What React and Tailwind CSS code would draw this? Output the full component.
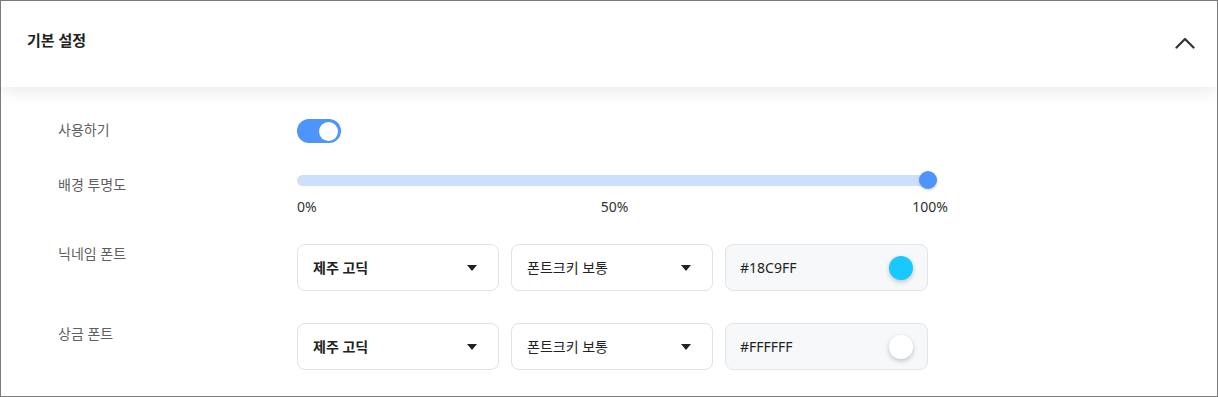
import React, { useState } from "react";

const FONT = {
  fontFamily: '"Noto Sans", "Noto Sans CJK KR", sans-serif',
};

const Caret = () => (
  <span className="w-0 h-0 border-l-[5px] border-r-[5px] border-t-[6px] border-l-transparent border-r-transparent border-t-[#222]" />
);

const Select = ({ text, bold }) => (
  <button className="w-[202px] h-[47px] flex items-center justify-between pl-[15px] pr-[21px] bg-white border border-[#e2e2e2] rounded-[8px]">
    <span className={`text-[14px] text-[#222] ${bold ? "font-bold" : ""}`}>{text}</span>
    <Caret />
  </button>
);

const ColorField = ({ value }) => (
  <div className="w-[203px] h-[47px] flex items-center justify-between pl-[14px] pr-[14px] bg-[#f7f8fa] border border-[#e2e4e7] rounded-[8px]">
    <span className="text-[14px] text-[#222]">{value}</span>
    <span
      className="w-[24px] h-[24px] rounded-full shadow-[0_2px_5px_rgba(0,0,0,0.22)]"
      style={{ backgroundColor: value }}
    />
  </div>
);

export default function App() {
  const [enabled, setEnabled] = useState(true);

  return (
    <div style={FONT} className="w-[1218px] h-[397px] border border-[#7b7b7b] bg-white overflow-hidden">
      {/* Header */}
      <div className="relative z-10 h-[86px] flex items-center justify-between pl-[26px] pr-[22px] bg-white shadow-[0_6px_14px_rgba(0,0,0,0.07)]">
        <h2 className="text-[15px] font-bold text-[#222] -mt-[8px]">기본 설정</h2>
        <svg width="20" height="12" viewBox="0 0 20 12" fill="none" className="-mt-[2px]">
          <path d="M1.5 10.5 L10 2 L18.5 10.5" stroke="#333" strokeWidth="2.2" strokeLinecap="round" strokeLinejoin="round" />
        </svg>
      </div>

      {/* Body */}
      <div className="pl-[57px] pt-[32px] text-[14px]">
        {/* 사용하기 */}
        <div className="flex items-center h-[24px]">
          <div className="w-[239px] text-[#5f5f5f] leading-[20px] -mt-[3px]">사용하기</div>
          <button
            onClick={() => setEnabled(!enabled)}
            className={`w-[44px] h-[24px] rounded-full flex items-center px-[3px] ${enabled ? "bg-[#4d94fb] justify-end" : "bg-[#d5d5d5] justify-start"}`}
          >
            <span className="w-[19px] h-[19px] rounded-full bg-white" />
          </button>
        </div>

        {/* 배경 투명도 */}
        <div className="flex mt-[28px]">
          <div className="w-[239px] text-[#5f5f5f] leading-[20px] pt-[4px]">배경 투명도</div>
          <div>
            <div className="relative w-[640px] h-[18px] flex items-center">
              <div className="w-full h-[11px] rounded-full bg-[#cce0fc]" />
              <span className="absolute right-0 top-0 w-[18px] h-[18px] rounded-full bg-[#4d94fb] shadow-[0_1px_3px_rgba(0,0,0,0.2)]" />
            </div>
            <div className="w-[651px] flex justify-between mt-[9px] text-[14px] leading-[18px] text-[#333]">
              <span>0%</span>
              <span>50%</span>
              <span>100%</span>
            </div>
          </div>
        </div>

        {/* 닉네임 폰트 */}
        <div className="flex mt-[28px]">
          <div className="w-[239px] text-[#5f5f5f] leading-[20px]">닉네임 폰트</div>
          <div className="flex gap-[12px]">
            <Select text="제주 고딕" bold />
            <Select text="폰트크키 보통" />
            <ColorField value="#18C9FF" />
          </div>
        </div>

        {/* 상금 폰트 */}
        <div className="flex mt-[32px]">
          <div className="w-[239px] text-[#5f5f5f] leading-[20px] pt-[1px]">상금 폰트</div>
          <div className="flex gap-[12px]">
            <Select text="제주 고딕" bold />
            <Select text="폰트크키 보통" />
            <ColorField value="#FFFFFF" />
          </div>
        </div>
      </div>
    </div>
  );
}
